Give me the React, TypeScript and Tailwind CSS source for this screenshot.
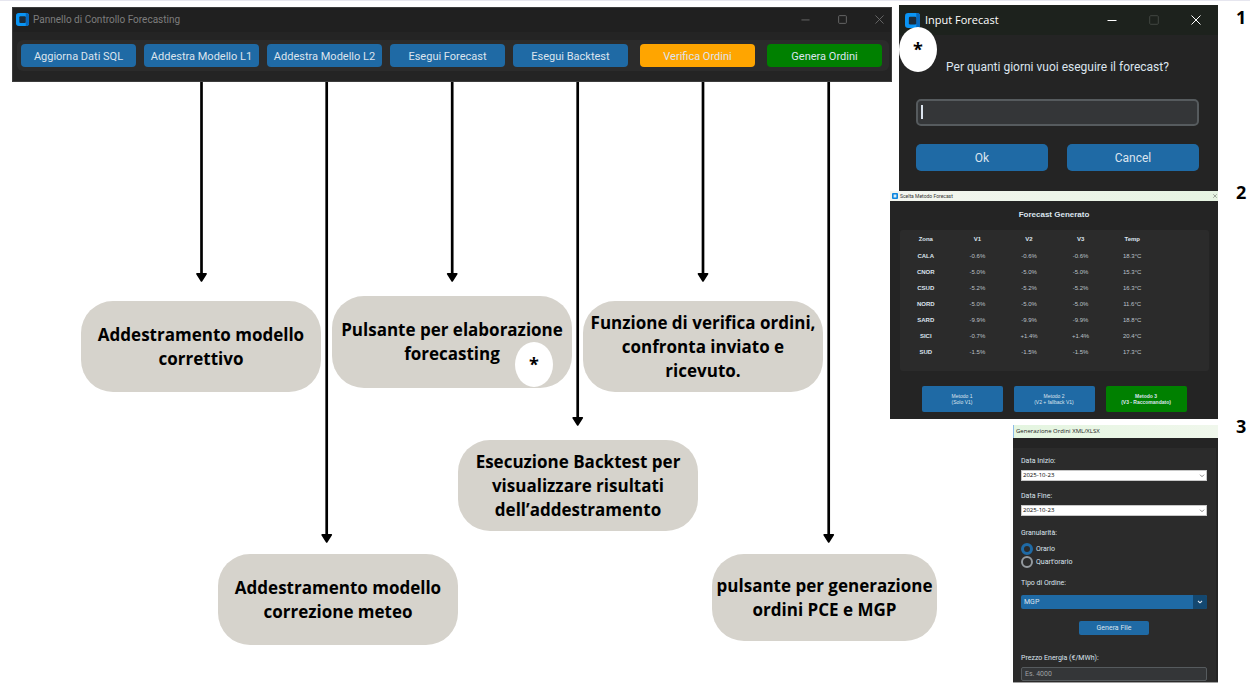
import type { ReactNode } from "react";

const toolbarButtons = [
  { label: "Aggiorna Dati SQL", style: "bg-[#1f6aa5]" },
  { label: "Addestra Modello L1", style: "bg-[#1f6aa5]" },
  { label: "Addestra Modello L2", style: "bg-[#1f6aa5]" },
  { label: "Esegui Forecast", style: "bg-[#1f6aa5]" },
  { label: "Esegui Backtest", style: "bg-[#1f6aa5]" },
  { label: "Verifica Ordini", style: "ml-1 bg-[#ffa500]" },
  { label: "Genera Ordini", style: "ml-1 bg-[#008000]" },
];

const arrows = [
  { x: 201.5, tip: 200 },
  { x: 326.7, tip: 461 },
  { x: 452.2, tip: 200 },
  { x: 577.7, tip: 344 },
  { x: 703, tip: 200 },
  { x: 828.7, tip: 461 },
];

const notes = [
  { lines: ["Addestramento modello", "correttivo"], place: "left-[81px] top-[219px] w-[240px] h-[91px]" },
  { lines: ["Pulsante per elaborazione", "forecasting"], place: "left-[332px] top-[214px] w-[240px] h-[92px]" },
  { lines: ["Funzione di verifica ordini,", "confronta inviato e", "ricevuto."], place: "left-[583px] top-[219px] w-[240px] h-[91px]" },
  { lines: ["Esecuzione Backtest per", "visualizzare risultati", "dell’addestramento"], place: "left-[458px] top-[358px] w-[240px] h-[91px]" },
  { lines: ["Addestramento modello", "correzione meteo"], place: "left-[218px] top-[472px] w-[240px] h-[91px]" },
  { lines: ["pulsante per generazione", "ordini PCE e MGP"], place: "left-[712px] top-[472px] w-[225px] h-[87px]" },
];

const zones = [
  ["CALA", "-0.6%", "-0.6%", "-0.6%", "18.3°C"],
  ["CNOR", "-5.0%", "-5.0%", "-5.0%", "15.3°C"],
  ["CSUD", "-5.2%", "-5.2%", "-5.2%", "16.3°C"],
  ["NORD", "-5.0%", "-5.0%", "-5.0%", "11.6°C"],
  ["SARD", "-9.9%", "-9.9%", "-9.9%", "18.8°C"],
  ["SICI", "-0.7%", "+1.4%", "+1.4%", "20.4°C"],
  ["SUD", "-1.5%", "-1.5%", "-1.5%", "17.3°C"],
];

function AppIcon({ className }: { className: string }) {
  return (
    <svg viewBox="0 0 14 14" className={className} aria-hidden="true">
      <rect width="14" height="14" rx="3" fill="#0a95f5" />
      <path d="M10.5 0H11a3 3 0 0 1 3 3v8a3 3 0 0 1-3 3h-.5z" fill="#0868bd" />
      <rect x="3.6" y="3.4" width="6.9" height="7.4" rx="1.2" fill="#1b2b3a" />
    </svg>
  );
}

function LightAppIcon() {
  return (
    <svg viewBox="0 0 6 6" className="size-1.5" aria-hidden="true">
      <rect width="6" height="6" rx="1" fill="#0a86e0" />
      <rect x="1.6" y="1.5" width="2.8" height="3" fill="#d8ecf6" />
    </svg>
  );
}

function Minimize({ className }: { className: string }) {
  return (
    <svg viewBox="0 0 10 10" className={className} fill="none" stroke="currentColor" aria-hidden="true">
      <path d="M0.5 5.5h9" />
    </svg>
  );
}

function Maximize({ className }: { className: string }) {
  return (
    <svg viewBox="0 0 10 10" className={className} fill="none" stroke="currentColor" aria-hidden="true">
      <rect x="0.7" y="0.7" width="8.6" height="8.6" rx="1" />
    </svg>
  );
}

function Close({ className }: { className: string }) {
  return (
    <svg viewBox="0 0 10 10" className={className} fill="none" stroke="currentColor" aria-hidden="true">
      <path d="M0.5 0.5l9 9M9.5 0.5l-9 9" />
    </svg>
  );
}

function Star({ className }: { className: string }) {
  return (
    <span
      className={`absolute flex h-[45px] w-[38px] justify-center rounded-[50%] bg-white pt-2 font-['Open_Sans',sans-serif] text-lg leading-7 font-bold text-black ${className}`}
    >
      *
    </span>
  );
}

function ControlPanel() {
  return (
    <section className="ml-3 flex h-[75px] flex-col border border-[#3c3c3c] bg-[#242424]">
      <header className="flex h-6 items-center bg-[#202020] pr-[7px] pb-px pl-[3px]">
        <AppIcon className="size-[13px]" />
        <h1 className="ml-1 flex-1 font-[Roboto,sans-serif] text-[10px] leading-4 text-[#7d7d7d]">
          Pannello di Controllo Forecasting
        </h1>
        <div className="flex items-center gap-7 text-[#6c6c6c]">
          <button aria-label="Riduci"><Minimize className="block size-[9px]" /></button>
          <button aria-label="Ingrandisci"><Maximize className="block size-[9px]" /></button>
          <button aria-label="Chiudi"><Close className="block size-[9px]" /></button>
        </div>
      </header>
      <nav className="mt-2 mr-0.5 ml-1 flex gap-2 rounded-md bg-[#2b2b2b] py-1 pr-[7px] pl-1">
        {toolbarButtons.map((b) => (
          <button
            key={b.label}
            className={`h-[23px] flex-1 rounded-[4px] pt-0.5 font-[Roboto,sans-serif] text-[11px] leading-4 whitespace-nowrap text-[#dce4ee] ${b.style}`}
          >
            {b.label}
          </button>
        ))}
      </nav>
    </section>
  );
}

function Diagram() {
  return (
    <section className="relative h-[600px]">
      <svg className="absolute top-0 left-0 h-[600px] w-[892px]" viewBox="0 0 892 600" aria-hidden="true">
        {arrows.map((a) => (
          <g key={a.x} stroke="#000" strokeLinejoin="round">
            <path d={`M${a.x} 0V${a.tip - 6}`} strokeWidth="2.7" />
            <path d={`M${a.x - 4.6} ${a.tip - 8.2}h9.2l-4.6 7.2z`} strokeWidth="1.6" />
          </g>
        ))}
      </svg>
      {notes.map((n) => (
        <p
          key={n.lines.join(" ")}
          className={`absolute flex flex-col items-center justify-center rounded-[32px] bg-[#d6d3cc] font-['Open_Sans',sans-serif] text-[17px] leading-6 font-bold whitespace-nowrap text-black ${n.place}`}
        >
          {n.lines.map((l) => (
            <span key={l}>{l}</span>
          ))}
        </p>
      ))}
      <Star className="top-[260px] left-[515px]" />
    </section>
  );
}

function Step({ number, raised, children }: { number: number; raised?: boolean; children: ReactNode }) {
  return (
    <div className="flex justify-end">
      {children}
      <span
        className={`w-8 pl-[18px] font-['Open_Sans',sans-serif] text-lg leading-6 font-bold text-black ${raised ? "-mt-[11px]" : ""}`}
      >
        {number}
      </span>
    </div>
  );
}

function InputDialog() {
  const button = "h-[27px] flex-1 rounded-[5px] bg-[#1f6aa5]";
  return (
    <section className="relative h-[186px] w-[319px] bg-[#242424] font-[Roboto,sans-serif] text-xs text-[#dce4ee]">
      <header className="flex h-[30px] items-center bg-[#1d221d] pr-[17px] pl-1.5 text-white">
        <AppIcon className="size-[15px]" />
        <h2 className="ml-[5px] flex-1 font-['Open_Sans',sans-serif] text-[11px]">Input Forecast</h2>
        <div className="flex items-center gap-8">
          <button aria-label="Riduci"><Minimize className="block size-[10px]" /></button>
          <button aria-label="Ingrandisci" className="text-[#424742]"><Maximize className="block size-[10px]" /></button>
          <button aria-label="Chiudi"><Close className="block size-[10px]" /></button>
        </div>
      </header>
      <Star className="top-[22px] left-0" />
      <form className="pt-6 pr-[19px] pl-[17px]" onSubmit={(e) => e.preventDefault()}>
        <label htmlFor="days" className="block text-center leading-4">
          Per quanti giorni vuoi eseguire il forecast?
        </label>
        <div className="relative mt-6">
          <input id="days" className="block h-[27px] w-full rounded-[5px] border-2 border-[#565b5e] bg-[#343638] px-2 outline-none" />
          <span className="absolute top-1.5 left-[5px] h-[14px] w-0.5 bg-[#dce4ee]" />
        </div>
        <div className="mt-[18px] flex gap-[19px]">
          <button className={button}>Ok</button>
          <button className={button}>Cancel</button>
        </div>
      </form>
    </section>
  );
}

function MethodDialog() {
  const button = "h-[26px] w-[81px] rounded-[2px] text-[5px] leading-[6px]";
  return (
    <section className="h-[228px] w-[328px] bg-[#242424] font-['Liberation_Sans',sans-serif] text-[#dce4ee]">
      <header className="flex h-[10px] items-center bg-linear-to-r from-[#f4f6f0] to-[#e6f4e2] pr-px pl-0.5 text-[#333]">
        <LightAppIcon />
        <h2 className="ml-0.5 flex-1 font-[Roboto,sans-serif] text-[5px] leading-[6px]">Scelta Metodo Forecast</h2>
        <button aria-label="Chiudi"><Close className="block size-1" /></button>
      </header>
      <h3 className="mt-[9px] text-center text-[8px] leading-[10px] font-bold">Forecast Generato</h3>
      <div className="mr-[9px] ml-[10px] mt-[10px] h-[141px] rounded-[3px] bg-[#2b2b2b]">
        <table className="w-[258px] table-fixed text-center text-[6px] leading-4">
          <thead>
            <tr className="h-[18px]">
              {["Zona", "V1", "V2", "V3", "Temp"].map((h) => (
                <th key={h} scope="col">{h}</th>
              ))}
            </tr>
          </thead>
          <tbody>
            {zones.map((row) => (
              <tr key={row[0]} className="h-4">
                <th scope="row">{row[0]}</th>
                {row.slice(1).map((v, i) => (
                  <td key={i} className="text-[#bcc2c9]">{v}</td>
                ))}
              </tr>
            ))}
          </tbody>
        </table>
      </div>
      <div className="mt-[15px] flex justify-center gap-[11px]">
        <button className={`${button} bg-[#1f6aa5]`}>Metodo 1<br />(Solo V1)</button>
        <button className={`${button} bg-[#1f6aa5]`}>Metodo 2<br />(V2 + fallback V1)</button>
        <button className={`${button} bg-[#008000] font-bold`}>Metodo 3<br />(V3 - Raccomandato)</button>
      </div>
    </section>
  );
}

function DateField({ id, label }: { id: string; label: string }) {
  return (
    <div>
      <label htmlFor={id} className="block leading-[10px]">{label}</label>
      <div className="relative mt-1">
        <select id={id} className="block h-[11px] w-full appearance-none border border-[#c8c8c8] bg-white pl-px font-['Open_Sans',sans-serif] text-[6px] leading-[9px] text-black">
          <option>2025-10-23</option>
        </select>
        <svg viewBox="0 0 6 4" className="pointer-events-none absolute top-1 right-0.5 h-1 w-1.5" fill="none" stroke="#666" strokeWidth="0.8" aria-hidden="true">
          <path d="M1 0.7l2 2 2-2" />
        </svg>
      </div>
    </div>
  );
}

function OrderDialog() {
  const radio = "size-3 appearance-none rounded-full border-2 border-[#949a9f] checked:border-[3px] checked:border-[#1f6aa5]";
  return (
    <section className="h-[258px] w-[205px] border-b border-[#a0a0a0] bg-[#2b2b2b] font-[Roboto,sans-serif] text-[7px] text-[#dce4ee]">
      <header className="flex h-[13px] items-center border-l border-[#8dbbe8] bg-linear-to-r from-[#e4f5e0] to-[#f0f7ec] pl-0.5">
        <h2 className="font-['Open_Sans',sans-serif] text-[6px] text-[#222]">Generazione Ordini XML/XLSX</h2>
      </header>
      <div className="h-[10px] bg-[#242424]" />
      <form className="border-r-2 border-[#242424] pt-2 pr-[9px] pl-2" onSubmit={(e) => e.preventDefault()}>
        <div className="flex flex-col gap-[10px]">
          <DateField id="start" label="Data Inizio:" />
          <DateField id="end" label="Data Fine:" />
        </div>
        <fieldset className="mt-3">
          <legend className="leading-[10px]">Granularità:</legend>
          <div className="flex flex-col gap-px pt-[5px]">
            <label className="flex items-center gap-[3px] leading-3">
              <input type="radio" name="granularity" defaultChecked className={radio} />
              Orario
            </label>
            <label className="flex items-center gap-[3px] leading-3">
              <input type="radio" name="granularity" className={radio} />
              Quart'orario
            </label>
          </div>
        </fieldset>
        <label htmlFor="order-type" className="mt-[10px] block leading-[10px]">Tipo di Ordine:</label>
        <div className="relative mt-[7px]">
          <select id="order-type" className="block h-[14px] w-full appearance-none rounded-[2px] bg-[#1f6aa5] pl-[3px] leading-[14px]">
            <option>MGP</option>
          </select>
          <span className="pointer-events-none absolute top-0 right-0 flex h-[14px] w-[14px] items-center justify-center rounded-r-[2px] bg-[#144870]">
            <svg viewBox="0 0 6 4" className="h-1 w-1.5" fill="none" stroke="#dce4ee" strokeWidth="1.1" aria-hidden="true">
              <path d="M1 1l2 1.8L5 1" />
            </svg>
          </span>
        </div>
        <button className="mx-auto mt-3 block h-[14px] w-[70px] rounded-[2px] bg-[#1f6aa5]">Genera File</button>
        <label htmlFor="price" className="mt-[18px] block leading-[10px]">Prezzo Energia (€/MWh):</label>
        <input
          id="price"
          placeholder="Es. 4000"
          className="mt-1 block h-[14px] w-full rounded-[2px] border border-[#565b5e] bg-[#343638] pl-[3px] placeholder:text-[#9ea0a2]"
        />
      </form>
    </section>
  );
}

export default function App() {
  return (
    <main className="flex min-h-screen border-t border-[#e6e6ef] bg-white">
      <div className="-mr-0.5 min-w-0 flex-1 pt-1.5">
        <ControlPanel />
        <Diagram />
      </div>
      <aside className="w-[360px] shrink-0 pt-1">
        <Step number={1}><InputDialog /></Step>
        <Step number={2} raised><MethodDialog /></Step>
        <div className="pt-1.5">
          <Step number={3} raised><OrderDialog /></Step>
        </div>
      </aside>
    </main>
  );
}
